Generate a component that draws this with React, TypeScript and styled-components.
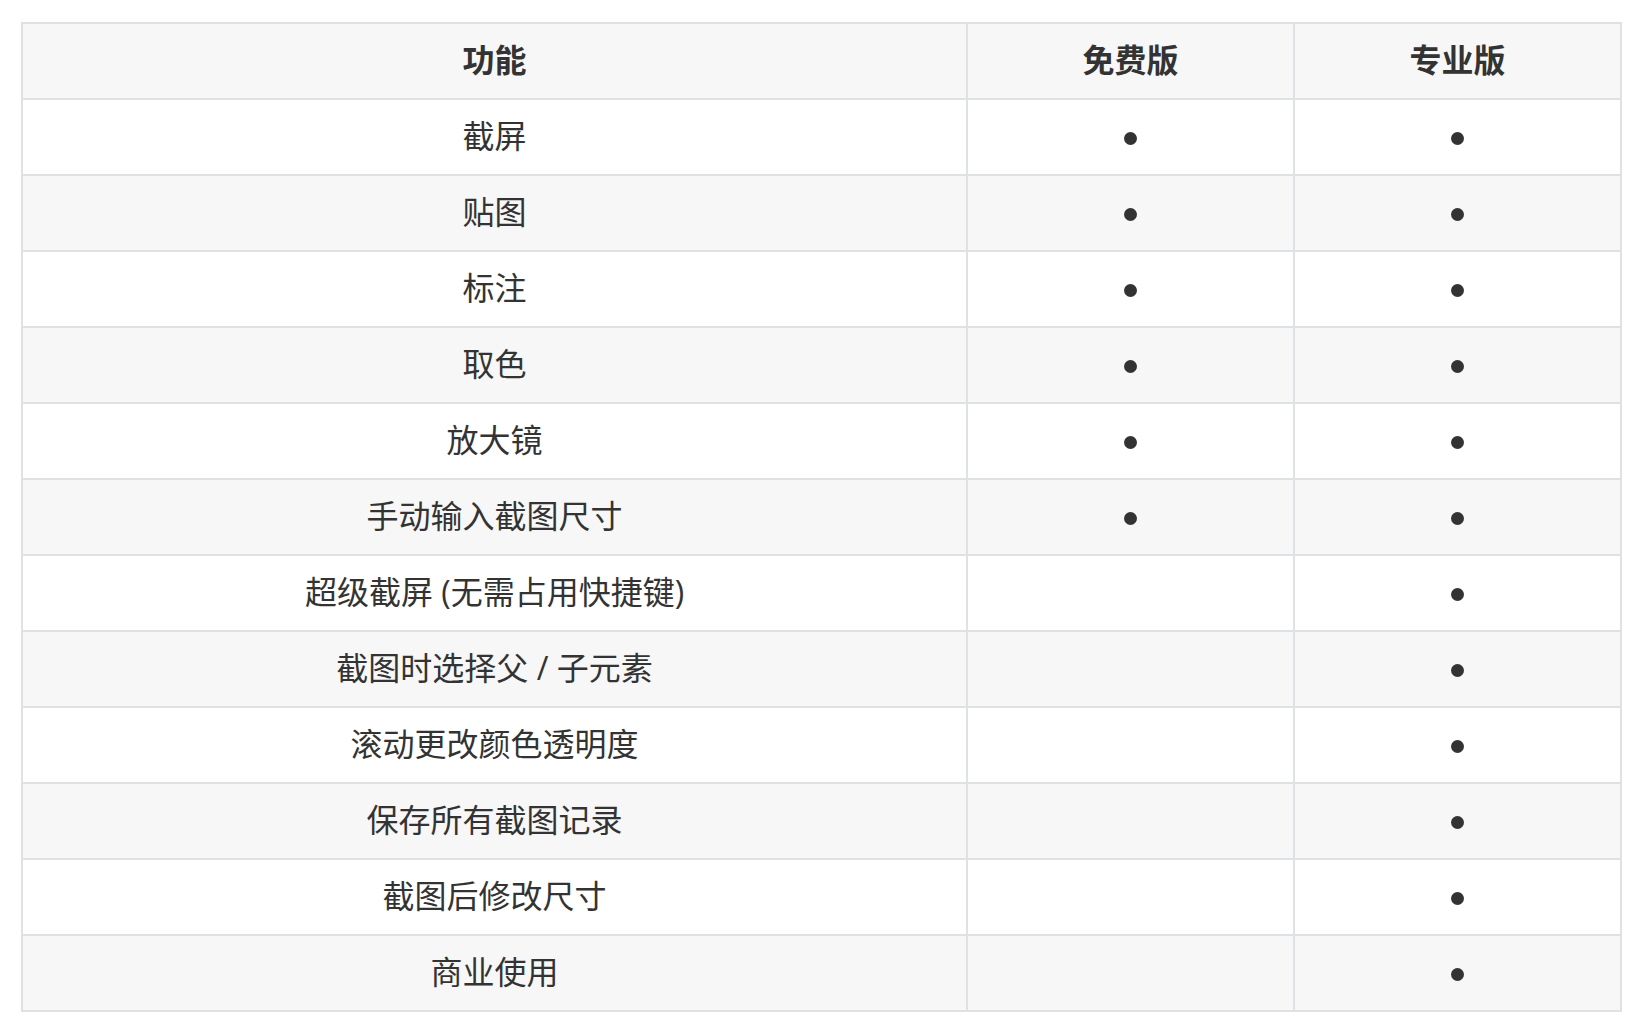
import React from 'react';
import styled, { createGlobalStyle } from 'styled-components';

type Feature = {
	name: string,
	free: boolean,
	pro: boolean
}

const features: Feature[] = [
	{ name: '截屏', free: true, pro: true },
	{ name: '贴图', free: true, pro: true },
	{ name: '标注', free: true, pro: true },
	{ name: '取色', free: true, pro: true },
	{ name: '放大镜', free: true, pro: true },
	{ name: '手动输入截图尺寸', free: true, pro: true },
	{ name: '超级截屏 (无需占用快捷键)', free: false, pro: true },
	{ name: '截图时选择父 / 子元素', free: false, pro: true },
	{ name: '滚动更改颜色透明度', free: false, pro: true },
	{ name: '保存所有截图记录', free: false, pro: true },
	{ name: '截图后修改尺寸', free: false, pro: true },
	{ name: '商业使用', free: false, pro: true },
];

const App: React.FC = () => {
	return <>
		<GlobalStyle />
		<Page>
			<Table>
				<colgroup>
					<col style={{ width: '945px' }} />
					<col style={{ width: '327px' }} />
					<col />
				</colgroup>
				<thead>
					<Row $shaded>
						<HeadCell>功能</HeadCell>
						<HeadCell>免费版</HeadCell>
						<HeadCell>专业版</HeadCell>
					</Row>
				</thead>
				<tbody>
					{features.map((f, i) => (
						<Row key={f.name} $shaded={i % 2 === 1}>
							<Cell>{f.name}</Cell>
							<Cell>{f.free && <Dot />}</Cell>
							<Cell>{f.pro && <Dot />}</Cell>
						</Row>
					))}
				</tbody>
			</Table>
		</Page>
	</>;
};

const GlobalStyle = createGlobalStyle`
	body {
		margin: 0;
		background: #ffffff;
		font-family: "Open Sans", "Noto Sans CJK SC", sans-serif;
		color: #333333;
	}
`

const Page = styled.div`
	padding: 22px 22px 21px 21px;
`

const Table = styled.table`
	width: 100%;
	border-collapse: collapse;
	table-layout: fixed;
	border: 2px solid #dfe2e5;
`

const Row = styled.tr<{ $shaded?: boolean }>`
	background: ${props => props.$shaded ? '#f7f7f7' : '#ffffff'};
`

const Cell = styled.td`
	height: 76px;
	box-sizing: border-box;
	padding: 0 26px 2px;
	border: 2px solid #dfe2e5;
	text-align: center;
	vertical-align: middle;
	font-size: 32px;
	line-height: 48px;
	color: #333333;
`

const HeadCell = styled(Cell).attrs({ as: 'th' })`
	font-weight: bold;
`

const Dot = styled.span`
	display: inline-block;
	width: 13px;
	height: 13px;
	border-radius: 50%;
	background: #333333;
	vertical-align: middle;
	position: relative;
	top: -1px;
`

export default App;
